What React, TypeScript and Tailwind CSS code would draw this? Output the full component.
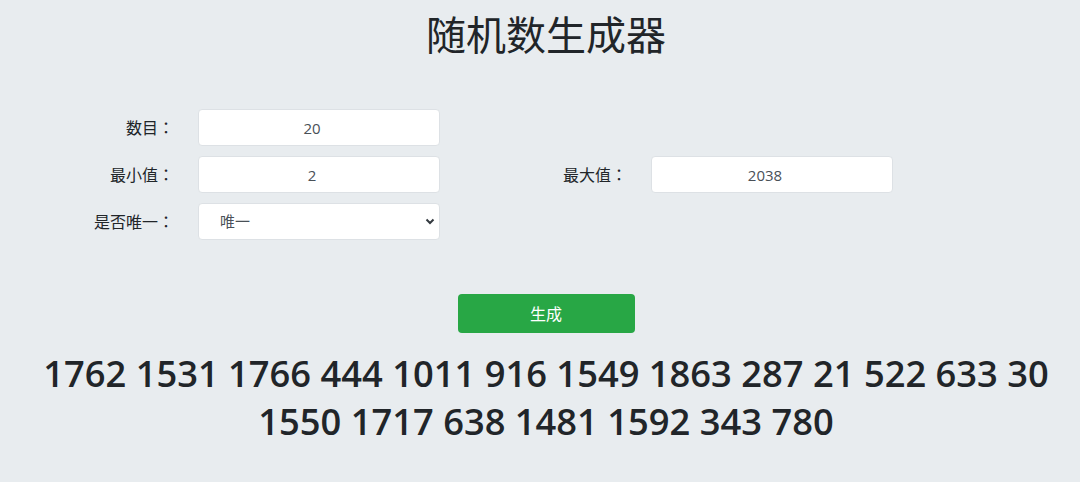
import { useState } from "react";

const numbers = [1762, 1531, 1766, 444, 1011, 916, 1549, 1863, 287, 21, 522, 633, 30, 1550, 1717, 638, 1481, 1592, 343, 780];

const font = { fontFamily: '"Open Sans", "Noto Sans CJK SC", sans-serif' };
const labelFont = { fontFamily: '"Open Sans", "Noto Sans CJK JP", sans-serif' };

function Field({ label, value }: { label: string; value: string }) {
  return (
    <div className="flex items-center">
      <label className="w-[100px] text-right text-[16px] text-[#212529]" style={labelFont}>{label}</label>
      <input
        defaultValue={value}
        className="ml-[24px] w-[242px] h-[37px] bg-white border border-[#dde1e5] rounded-[4px] pr-[14px] text-center text-[15px] text-[#495057] outline-none"
      />
    </div>
  );
}

export default function App() {
  const [unique, setUnique] = useState("1");

  return (
    <div className="min-h-[482px] bg-[#e8ecef] pl-[12px] pt-[11px]" style={font}>
      <h1 className="text-center text-[40px] leading-[1.2] text-[#212529]">随机数生成器</h1>

      <div className="mt-[50px] ml-[62px] flex flex-col gap-[10px]">
        <Field label="数目：" value="20" />
        <div className="flex items-center gap-[87px]">
          <Field label="最小值：" value="2" />
          <Field label="最大值：" value="2038" />
        </div>
        <div className="flex items-center">
          <label className="w-[100px] text-right text-[16px] text-[#212529]" style={labelFont}>是否唯一：</label>
          <div className="relative ml-[24px] w-[242px]">
            <select
              value={unique}
              onChange={(e) => setUnique(e.target.value)}
              className="appearance-none w-full h-[37px] bg-white border border-[#dde1e5] rounded-[4px] pl-[21px] text-[15px] text-[#495057] outline-none"
            >
              <option value="1">唯一</option>
              <option value="0">不唯一</option>
            </select>
            <svg className="absolute right-[5px] top-[15px] pointer-events-none" width="10" height="7" viewBox="0 0 10 7">
              <path d="M1.5 1.5 L5 5 L8.5 1.5" fill="none" stroke="#343a40" strokeWidth="2" />
            </svg>
          </div>
        </div>
      </div>

      <div className="mt-[54px] flex justify-center">
        <button className="w-[177px] h-[39px] bg-[#28a745] rounded-[4px] text-white text-[16px]">生成</button>
      </div>

      <p className="mt-[16px] text-center text-[36.3px] leading-[48px] font-semibold text-[#212529]">
        {numbers.join(" ")}
      </p>
    </div>
  );
}
